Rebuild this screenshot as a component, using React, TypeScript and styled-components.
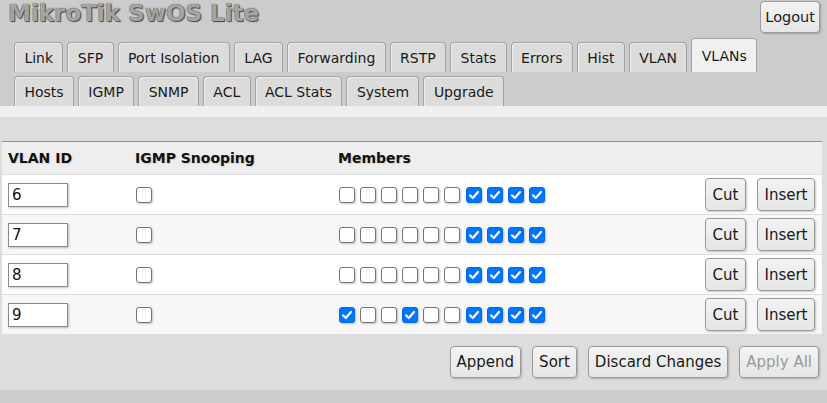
import React from "react";
import styled, { createGlobalStyle, css } from "styled-components";

const GlobalStyle = createGlobalStyle`
  html, body { margin: 0; padding: 0; }
  body {
    background: #cccccc;
    font-family: "DejaVu Sans", Verdana, sans-serif;
    color: #1a1a1a;
  }
`;

const Page = styled.div`
  width: 827px;
  min-height: 403px;
  background: #cccccc;
`;

const Header = styled.header`
  display: flex;
  justify-content: space-between;
  align-items: flex-start;
  height: 42px;
  padding: 0 7px 0 8px;
`;

const Title = styled.h1`
  margin: 0;
  font-size: 23px;
  line-height: 26px;
  font-weight: bold;
  color: #a4a4a4;
  text-shadow: 0 0 1px #3a3a3a, 1px 1px 1px #4a4a4a;
`;

const Button = styled.button<{ $disabled?: boolean }>`
  font-family: "DejaVu Sans", Verdana, sans-serif;
  font-size: 15px;
  line-height: 20px;
  padding: 5px 6px;
  height: 32px;
  border: 1px solid #9a9a9a;
  border-radius: 4px;
  background: linear-gradient(#f3f3f3, #e6e6e6);
  box-shadow: 1px 1px 2px rgba(0, 0, 0, 0.22);
  color: ${(p) => (p.$disabled ? "#9a9a9a" : "#1a1a1a")};
  cursor: default;
  white-space: nowrap;
`;

const LogoutButton = styled(Button)`
  margin-top: 1px;
  font-size: 14.5px;
  padding: 5px 4px;
`;

const TabArea = styled.nav`
  display: flex;
  flex-direction: column;
  gap: 4px;
  padding-left: 14px;
`;

const TabRow = styled.div`
  display: flex;
  align-items: flex-end;
  gap: 4px;
  height: 30px;
`;

const Tab = styled.div<{ $active?: boolean }>`
  box-sizing: border-box;
  height: 30px;
  padding: 0 9.4px;
  display: flex;
  align-items: center;
  font-size: 14px;
  color: #1a1a1a;
  background: #dcdcdc;
  border: 1px solid #a3a3a3;
  border-bottom: none;
  border-radius: 4px 4px 0 0;
  box-shadow: inset 1px 1px 0 #ededed;
  ${(p) =>
    p.$active &&
    css`
      height: 34px;
      background: #f0f0f0;
      box-shadow: none;
    `}
`;

const Content = styled.main`
  background: #dddddd;
  border-top: 11px solid #f0f0f0;
  padding: 24px 5px 12px 2px;
`;

const Table = styled.div`
  border-top: 1px solid #8f8f8f;
  background: #ffffff;
`;

const HeadRow = styled.div`
  display: flex;
  align-items: center;
  height: 33px;
  background: #eeeeee;
  border-bottom: 1px solid #dddddd;
  box-sizing: border-box;
`;

const Row = styled.div<{ $alt?: boolean }>`
  display: flex;
  align-items: center;
  height: 40px;
  box-sizing: border-box;
  border-bottom: 1px solid #dddddd;
  background: ${(p) => (p.$alt ? "#f7f7f7" : "#ffffff")};
`;

const Cell = styled.div<{ $w?: number }>`
  box-sizing: border-box;
  ${(p) => (p.$w ? `width: ${p.$w}px; flex: none;` : "flex: 1;")}
  padding-left: 6px;
  display: flex;
  align-items: center;
`;

const HeadCell = styled(Cell)`
  font-weight: bold;
  font-size: 14px;
  color: #111;
  text-shadow: 1px 1px 1px rgba(0, 0, 0, 0.12);
`;

const Actions = styled.div`
  display: flex;
  gap: 11px;
  padding-right: 7px;
  align-items: center;
`;

const RowButton = styled(Button)`
  height: 33px;
  padding: 5px 6.5px;
`;

const IdInput = styled.input`
  box-sizing: border-box;
  width: 60px;
  height: 24px;
  margin: 0;
  padding: 0 3px;
  font-family: "DejaVu Sans", Verdana, sans-serif;
  font-size: 15px;
  color: #111;
  background: #fff;
  border: 1px solid #8a8a8a;
  box-shadow: 1px 1px 2px rgba(0, 0, 0, 0.25);
  outline: none;
`;

const Boxes = styled.div`
  display: flex;
  gap: 5.1px;
  padding-left: 1px;
`;

const Box = styled.span<{ $on?: boolean }>`
  box-sizing: border-box;
  width: 16px;
  height: 16px;
  border-radius: 3px;
  display: inline-flex;
  align-items: center;
  justify-content: center;
  box-shadow: 1px 1px 2px rgba(0, 0, 0, 0.22);
  ${(p) =>
    p.$on
      ? css`
          background: #0075ff;
          border: 1px solid #0069e6;
        `
      : css`
          background: #ffffff;
          border: 1px solid #767676;
        `}
`;

const SingleBox = styled(Box)`
  margin-left: 1px;
`;

const Footer = styled.div`
  display: flex;
  justify-content: flex-end;
  gap: 11px;
  padding: 11px 3px 0 0;
`;

function Check({ on, single }: { on: boolean; single?: boolean }) {
  const B = single ? SingleBox : Box;
  return (
    <B $on={on} role="checkbox" aria-checked={on}>
      {on && (
        <svg width="12" height="12" viewBox="0 0 12 12">
          <polyline
            points="2,6.3 4.8,9 10,3"
            fill="none"
            stroke="#ffffff"
            strokeWidth="2.2"
            strokeLinecap="round"
            strokeLinejoin="round"
          />
        </svg>
      )}
    </B>
  );
}

const tabRows = [
  ["Link", "SFP", "Port Isolation", "LAG", "Forwarding", "RSTP", "Stats", "Errors", "Hist", "VLAN", "VLANs"],
  ["Hosts", "IGMP", "SNMP", "ACL", "ACL Stats", "System", "Upgrade"],
];

const vlans = [
  { id: "6", members: [0, 0, 0, 0, 0, 0, 1, 1, 1, 1] },
  { id: "7", members: [0, 0, 0, 0, 0, 0, 1, 1, 1, 1] },
  { id: "8", members: [0, 0, 0, 0, 0, 0, 1, 1, 1, 1] },
  { id: "9", members: [1, 0, 0, 1, 0, 0, 1, 1, 1, 1] },
];

export default function App() {
  return (
    <Page>
      <GlobalStyle />
      <Header>
        <Title>MikroTik SwOS Lite</Title>
        <LogoutButton>Logout</LogoutButton>
      </Header>
      <TabArea>
        {tabRows.map((row, i) => (
          <TabRow key={i}>
            {row.map((t) => (
              <Tab key={t} $active={t === "VLANs"}>
                {t}
              </Tab>
            ))}
          </TabRow>
        ))}
      </TabArea>
      <Content>
        <Table>
          <HeadRow>
            <HeadCell $w={127}>VLAN ID</HeadCell>
            <HeadCell $w={203}>IGMP Snooping</HeadCell>
            <HeadCell>Members</HeadCell>
          </HeadRow>
          {vlans.map((v, i) => (
            <Row key={v.id} $alt={i % 2 === 1}>
              <Cell $w={127}>
                <IdInput defaultValue={v.id} />
              </Cell>
              <Cell $w={203}>
                <Check on={false} single />
              </Cell>
              <Cell>
                <Boxes>
                  {v.members.map((m, j) => (
                    <Check key={j} on={m === 1} />
                  ))}
                </Boxes>
              </Cell>
              <Actions>
                <RowButton>Cut</RowButton>
                <RowButton>Insert</RowButton>
              </Actions>
            </Row>
          ))}
        </Table>
        <Footer>
          <Button>Append</Button>
          <Button>Sort</Button>
          <Button>Discard Changes</Button>
          <Button $disabled>Apply All</Button>
        </Footer>
      </Content>
    </Page>
  );
}
